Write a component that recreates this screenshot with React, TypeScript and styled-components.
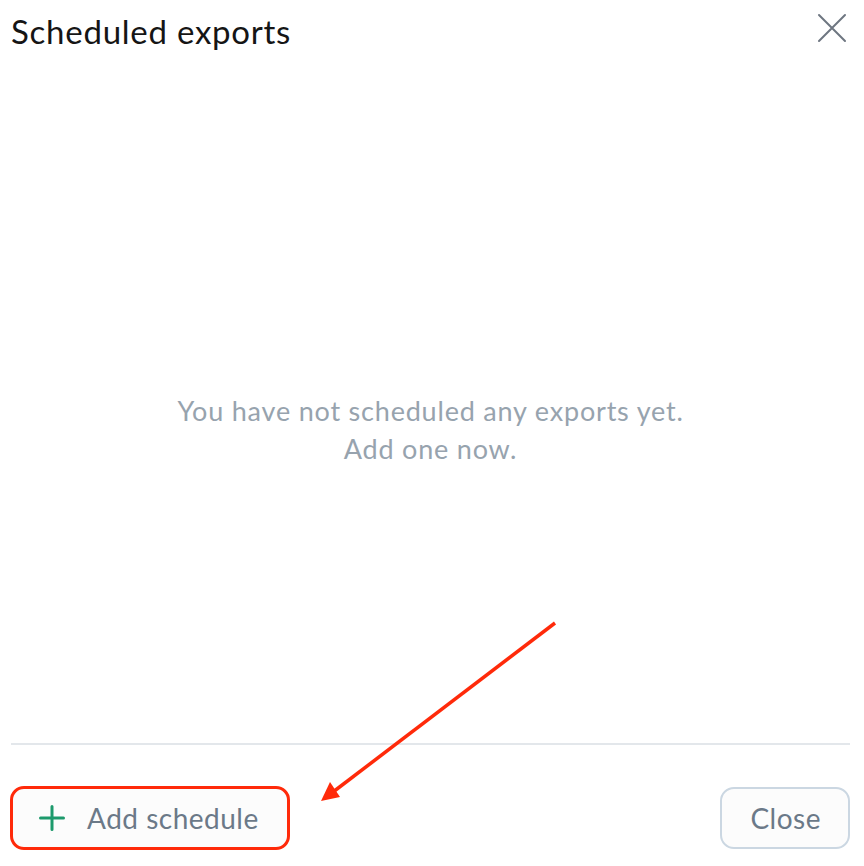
import styled, { createGlobalStyle } from 'styled-components'

const GlobalStyle = createGlobalStyle`
  html, body {
    margin: 0;
    padding: 0;
    background: #ffffff;
  }
  body {
    font-family: Lato, "Noto Sans", "Liberation Sans", sans-serif;
  }
`

const Dialog = styled.div`
  position: relative;
  width: 864px;
  height: 866px;
  box-sizing: border-box;
  padding: 0 14px 16px 11px;
  display: flex;
  flex-direction: column;
  background: #fff;
`

const Header = styled.div`
  display: flex;
  align-items: flex-start;
  justify-content: space-between;
  height: 62px;
`

const Title = styled.h1`
  margin: 12px 0 0;
  font-size: 33px;
  line-height: 1.2;
  font-weight: 400;
  color: #151515;
  letter-spacing: 0.75px;
`

const CloseIcon = styled.button`
  margin: 12px 2px 0 0;
  padding: 0;
  border: none;
  background: transparent;
  width: 32px;
  height: 32px;
  display: flex;
  align-items: center;
  justify-content: center;
  cursor: pointer;
`

const Body = styled.div`
  flex: 1;
  display: flex;
  align-items: center;
  justify-content: center;
  padding-top: 54px;
`

const EmptyText = styled.p`
  margin: 0;
  text-align: center;
  font-size: 27px;
  line-height: 38px;
  letter-spacing: 0.8px;
  color: #97a3ae;
`

const Divider = styled.hr`
  margin: 0;
  border: none;
  height: 2px;
  background: #e3e7eb;
`

const Footer = styled.div`
  display: flex;
  align-items: center;
  justify-content: space-between;
  padding-top: 41px;
`

const Button = styled.button<{ $highlight?: boolean }>`
  display: flex;
  align-items: center;
  gap: 22px;
  height: ${(p) => (p.$highlight ? '64px' : '62px')};
  margin-left: ${(p) => (p.$highlight ? '-1px' : '0')};
  box-sizing: border-box;
  padding: ${(p) => (p.$highlight ? '0 28px 0 26px' : '0 27px 0 28px')};
  border: ${(p) => (p.$highlight ? '3px solid #ff2a0a' : '2px solid #cbd7e2')};
  border-radius: 14px;
  background: #fcfcfc;
  font-family: inherit;
  font-size: 28px;
  letter-spacing: 0.5px;
  color: #6b7988;
  cursor: pointer;
`

const Annotation = styled.svg`
  position: absolute;
  left: 0;
  top: 0;
  pointer-events: none;
`

export default function App() {
  return (
    <>
      <GlobalStyle />
      <Dialog>
        <Header>
          <Title>Scheduled exports</Title>
          <CloseIcon aria-label="Close">
            <svg width="30" height="30" viewBox="0 0 30 30">
              <path
                d="M2 2 L28 28 M28 2 L2 28"
                stroke="#6e7681"
                strokeWidth="2"
                strokeLinecap="round"
              />
            </svg>
          </CloseIcon>
        </Header>
        <Body>
          <EmptyText>
            You have not scheduled any exports yet.
            <br />
            Add one now.
          </EmptyText>
        </Body>
        <Divider />
        <Footer>
          <Button $highlight>
            <svg width="26" height="26" viewBox="0 0 26 26">
              <path
                d="M13 1.5 V24.5 M1.5 13 H24.5"
                stroke="#1d9a6c"
                strokeWidth="3"
                strokeLinecap="round"
              />
            </svg>
            Add schedule
          </Button>
          <Button>Close</Button>
        </Footer>
        <Annotation width="864" height="866">
          <line
            x1="555"
            y1="623"
            x2="333"
            y2="792"
            stroke="#ff2a0a"
            strokeWidth="3.5"
          />
          <polygon points="321,801 330,782 340,797" fill="#ff2a0a" />
        </Annotation>
      </Dialog>
    </>
  )
}
